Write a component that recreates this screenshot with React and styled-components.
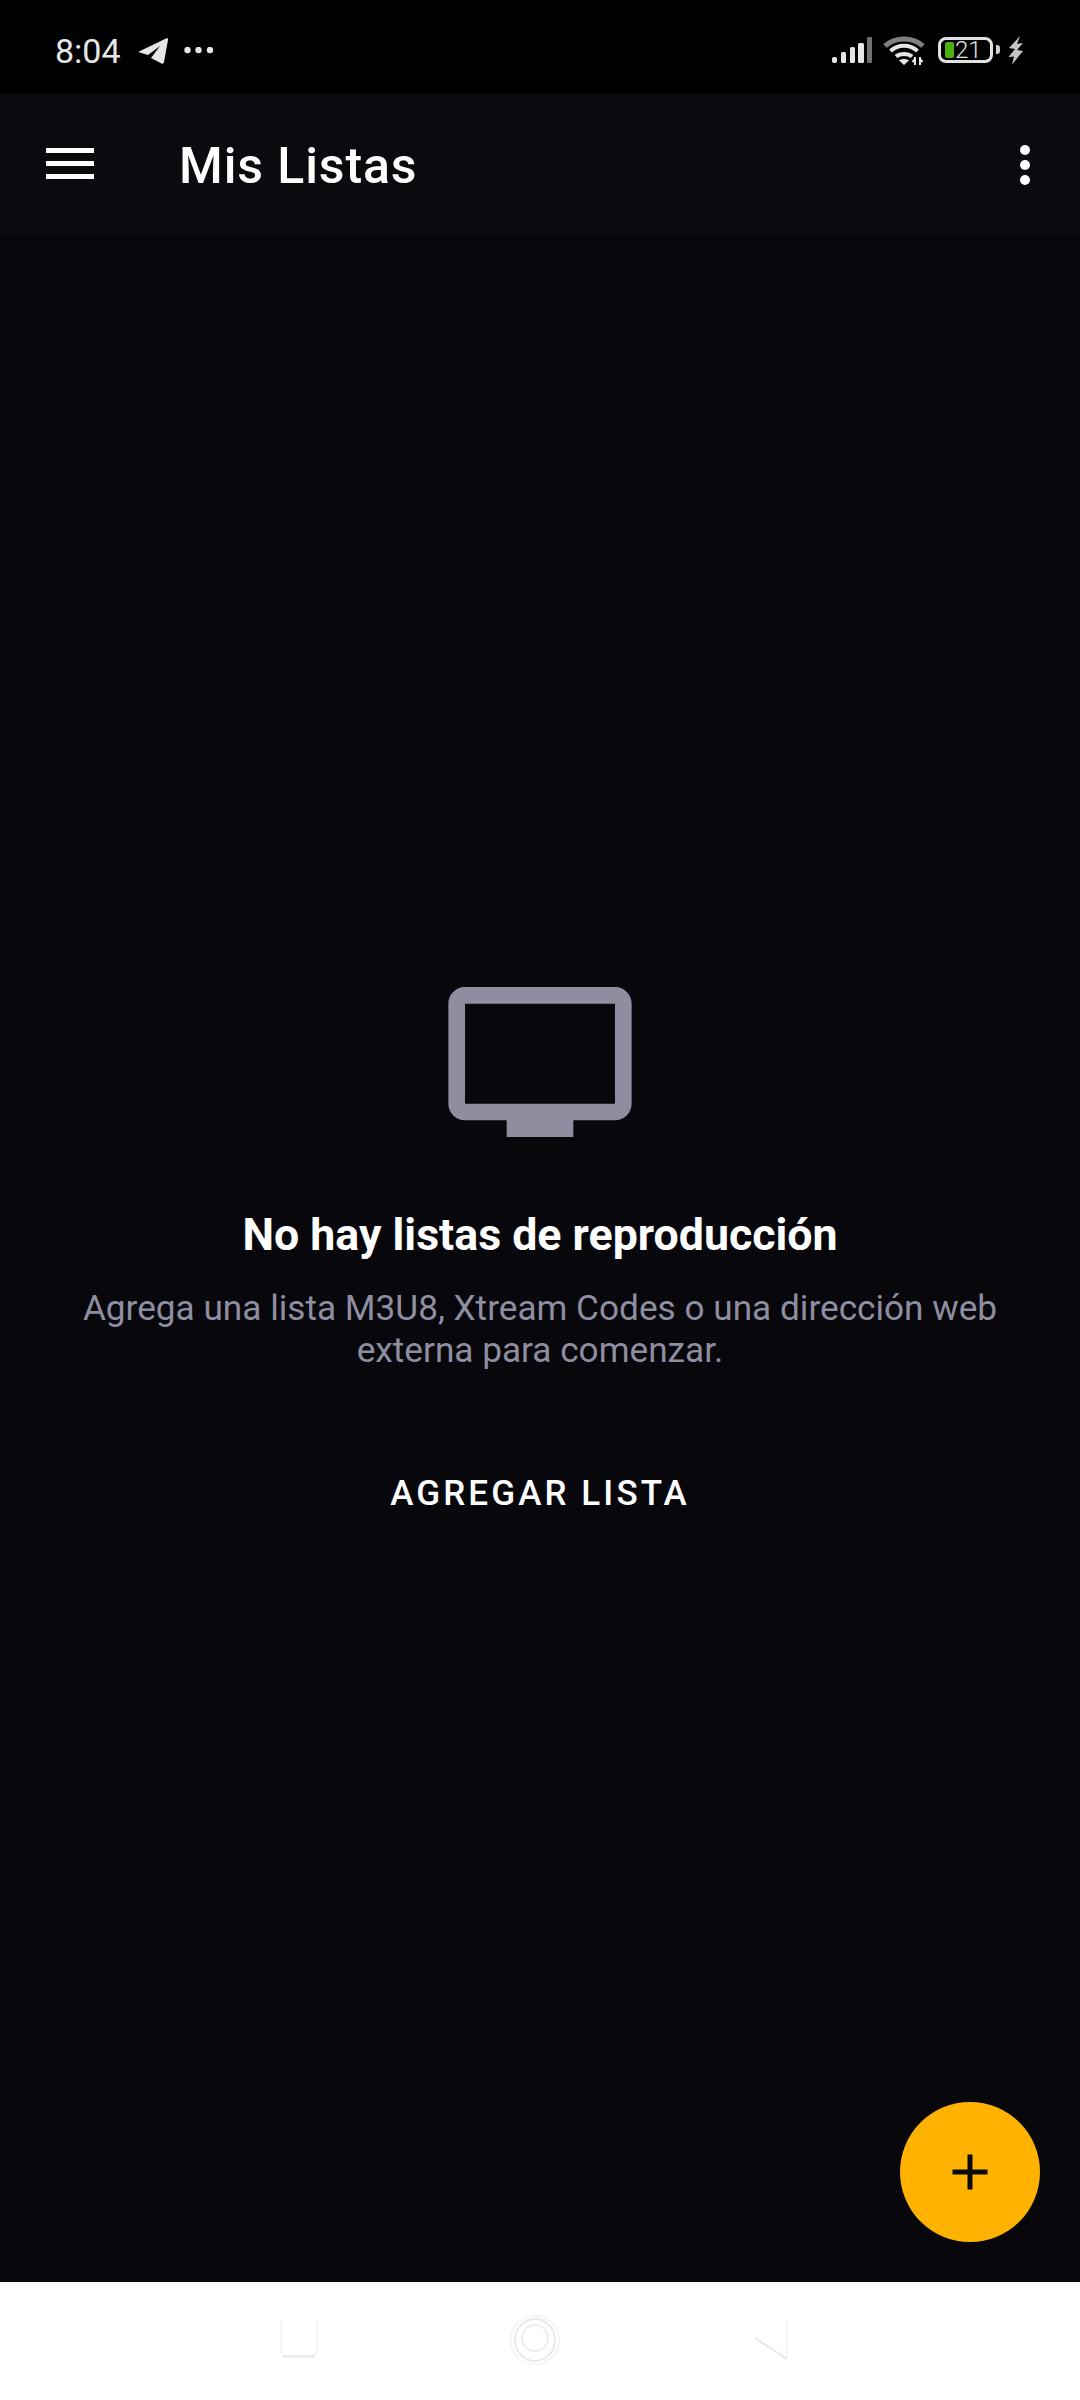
import styled, { createGlobalStyle } from "styled-components";

const GlobalStyle = createGlobalStyle`
  html, body {
    margin: 0;
    padding: 0;
    background: #000;
  }
  * {
    box-sizing: border-box;
  }
`;

const Screen = styled.div`
  position: relative;
  width: 1080px;
  height: 2400px;
  display: flex;
  flex-direction: column;
  overflow: hidden;
  background: #07070c;
  font-family: Roboto, "Noto Sans", sans-serif;
`;

const StatusBar = styled.div`
  height: 94px;
  flex: none;
  background: #000;
  color: #e6e6e6;
  display: flex;
  align-items: center;
  padding: 0 57px 0 55px;
`;

const Clock = styled.span`
  font-size: 34px;
  line-height: 38px;
  width: 83px;
  margin-top: 7px;
`;

const StatusLeft = styled.div`
  display: flex;
  align-items: center;
  gap: 16px;
  margin-top: 8px;
`;

const StatusRight = styled.div`
  margin-left: auto;
  display: flex;
  align-items: center;
  margin-top: 5px;
`;

const Glyph = styled.svg`
  display: block;
  flex: none;
  margin-left: ${(p) => p.$left || 0}px;
`;

const Battery = styled.div`
  position: relative;
  width: 55px;
  height: 26px;
  margin-left: 13px;
  border: 3px solid #e2e2e2;
  border-radius: 8px;
  display: flex;
  align-items: center;
  padding-left: 4px;
  font-size: 24px;
  font-weight: 300;
  line-height: 20px;

  &::after {
    content: "";
    position: absolute;
    right: -10px;
    top: 5px;
    width: 4px;
    height: 9px;
    border-radius: 0 3px 3px 0;
    background: #cfcfcf;
  }
`;

const BatteryLevel = styled.span`
  flex: none;
  width: 9px;
  height: 16px;
  border-radius: 2px;
  background: #4caf12;
  margin-right: 1px;
`;

const AppBar = styled.header`
  height: 142px;
  flex: none;
  display: flex;
  align-items: center;
  padding: 0 46px;
  background: #0a0a0f;
`;

const Hamburger = styled.div`
  width: 48px;
  height: 31px;
  margin-top: -3px;
  display: flex;
  flex-direction: column;
  justify-content: space-between;

  span {
    display: block;
    height: 5px;
    background: #fff;
  }
`;

const Title = styled.h1`
  margin: 1px 0 0 85px;
  color: #fff;
  font-size: 50px;
  line-height: 56px;
  font-weight: 500;
  letter-spacing: 0.9px;
`;

const Kebab = styled.div`
  margin-left: auto;
  margin-right: 4px;
  margin-top: -1px;
  display: flex;
  flex-direction: column;
  gap: 5px;

  span {
    width: 10px;
    height: 10px;
    border-radius: 50%;
    background: #fff;
  }
`;

const Main = styled.main`
  flex: 1;
  display: flex;
  flex-direction: column;
  align-items: center;
  justify-content: center;
  text-align: center;
  background: #07070c;
`;

const EmptyIcon = styled.svg`
  width: 200px;
  height: 200px;
  fill: #8e8ea0;
  display: block;
`;

const Heading = styled.h2`
  margin: 45px 0 0;
  color: #fff;
  font-size: 44.7px;
  line-height: 56px;
  font-weight: 700;
`;

const Description = styled.p`
  margin: 24px 0 0;
  width: 960px;
  color: #8e8ea0;
  font-size: 35.2px;
  line-height: 42px;
`;

const AddButton = styled.button`
  height: 126px;
  margin-top: 59px;
  padding: 0 32px;
  border: none;
  background: transparent;
  color: #fff;
  font-family: inherit;
  font-size: 35px;
  font-weight: 500;
  letter-spacing: 3.1px;
`;

const Fab = styled.button`
  position: absolute;
  left: 900px;
  top: 2102px;
  width: 140px;
  height: 140px;
  padding: 0;
  border: none;
  border-radius: 50%;
  background: #ffb300;
  display: flex;
  align-items: center;
  justify-content: center;
`;

const NavBar = styled.nav`
  height: 118px;
  flex: none;
  background: #fff;
  display: flex;
  align-items: center;
  justify-content: center;
  gap: 176px;
  padding-right: 10px;
`;

const NavIcon = styled.svg`
  width: 60px;
  height: 60px;
  display: block;
  fill: none;
  filter: blur(0.7px);
`;

function StatusIcons() {
  return (
    <StatusRight>
      <Glyph width="41" height="30" viewBox="0 0 41 30">
        <rect x="0" y="22" width="5" height="6" rx="2" fill="#e6e6e6" />
        <rect x="9" y="17" width="5" height="11" rx="1.5" fill="#e6e6e6" />
        <rect x="18" y="12" width="5" height="16" rx="1.5" fill="#e6e6e6" />
        <rect x="26" y="8" width="6" height="20" rx="1.5" fill="#e6e6e6" />
        <rect x="35" y="2" width="5" height="26" rx="1" fill="#707070" />
      </Glyph>
      <Glyph $left={10} width="42" height="32" viewBox="0 0 42 32" fill="none">
        <path d="M2 12C12 2.500 30 2.500 40 12" stroke="#808080" strokeWidth="5" />
        <path d="M7.500 17C15 10 27 10 34.500 17" stroke="#e6e6e6" strokeWidth="4" />
        <path d="M13 22.500C17 19 25 19 29 22.500" stroke="#e6e6e6" strokeWidth="4" />
        <path d="M16 26.500C18.500 24.500 23.500 24.500 26 26.500L21 31Z" fill="#e6e6e6" />
        <path d="M32 23v8M29.500 28l2.500-3M37 23v8M39.500 28l-2.500-3" stroke="#e6e6e6" strokeWidth="2" />
      </Glyph>
      <Battery>
        <BatteryLevel />
        21
      </Battery>
      <Glyph $left={15} width="15" height="30" viewBox="0 0 15 30">
        <path d="M12 1 1 13l6 1-6.500 8 5.500-.5L4 29.500 15 16l-6-1 6-7-6 1z" fill="#c4c4c4" />
      </Glyph>
    </StatusRight>
  );
}

function App() {
  return (
    <Screen>
      <GlobalStyle />
      <StatusBar>
        <Clock>8:04</Clock>
        <StatusLeft>
          <Glyph width="30" height="26" viewBox="0 0 30 26">
            <path
              d="M0 14 28.500.3Q30.500-.3 30 2L26 24Q25.500 26.500 23.500 25.500L13 20 22 8 10 17Z"
              fill="#e6e6e6"
            />
          </Glyph>
          <Glyph width="30" height="8" viewBox="0 0 30 8">
            <circle cx="3.500" cy="3" r="3.200" fill="#e6e6e6" />
            <circle cx="14.500" cy="3" r="3.200" fill="#e6e6e6" />
            <circle cx="26" cy="3" r="3.200" fill="#e6e6e6" />
          </Glyph>
        </StatusLeft>
        <StatusIcons />
      </StatusBar>

      <AppBar>
        <Hamburger>
          <span />
          <span />
          <span />
        </Hamburger>
        <Title>Mis Listas</Title>
        <Kebab>
          <span />
          <span />
          <span />
        </Kebab>
      </AppBar>

      <Main>
        <EmptyIcon viewBox="0 0 24 24">
          <path d="M21 3H3c-1.100 0-2 .9-2 2v12c0 1.100.9 2 2 2h5v2h8v-2h5c1.100 0 2-.9 2-2V5c0-1.100-.9-2-2-2zm0 14H3V5h18v12z" />
        </EmptyIcon>
        <Heading>No hay listas de reproducción</Heading>
        <Description>
          Agrega una lista M3U8, Xtream Codes o una dirección web externa para
          comenzar.
        </Description>
        <AddButton>AGREGAR LISTA</AddButton>
      </Main>

      <Fab>
        <svg width="60" height="60" viewBox="0 0 24 24" fill="#0a0a0f">
          <path d="M19 13h-6v6h-2v-6H5v-2h6V5h2v6h6v2z" />
        </svg>
      </Fab>

      <NavBar>
        <NavIcon viewBox="0 0 60 60">
          <path d="M12 9V39Q12 45 18 45H42Q48 45 48 39V9" stroke="#f4f4f4" strokeWidth="1.500" />
          <path d="M14 45.500H46" stroke="#e6e6e6" strokeWidth="2" />
        </NavIcon>
        <NavIcon viewBox="0 0 60 60">
          <ellipse cx="30" cy="29" rx="24.500" ry="24" stroke="#f2f2f2" strokeWidth="1.500" />
          <ellipse cx="30" cy="29" rx="20" ry="21" stroke="#e8e8e8" strokeWidth="2" />
          <ellipse cx="30" cy="27" rx="13" ry="13" stroke="#e8e8e8" strokeWidth="1.500" />
        </NavIcon>
        <NavIcon viewBox="0 0 60 60">
          <path d="M46 7V47" stroke="#f4f4f4" strokeWidth="1.500" />
          <path d="M46 48L14 27" stroke="#e6e6e6" strokeWidth="2" />
        </NavIcon>
      </NavBar>
    </Screen>
  );
}

export default App;
